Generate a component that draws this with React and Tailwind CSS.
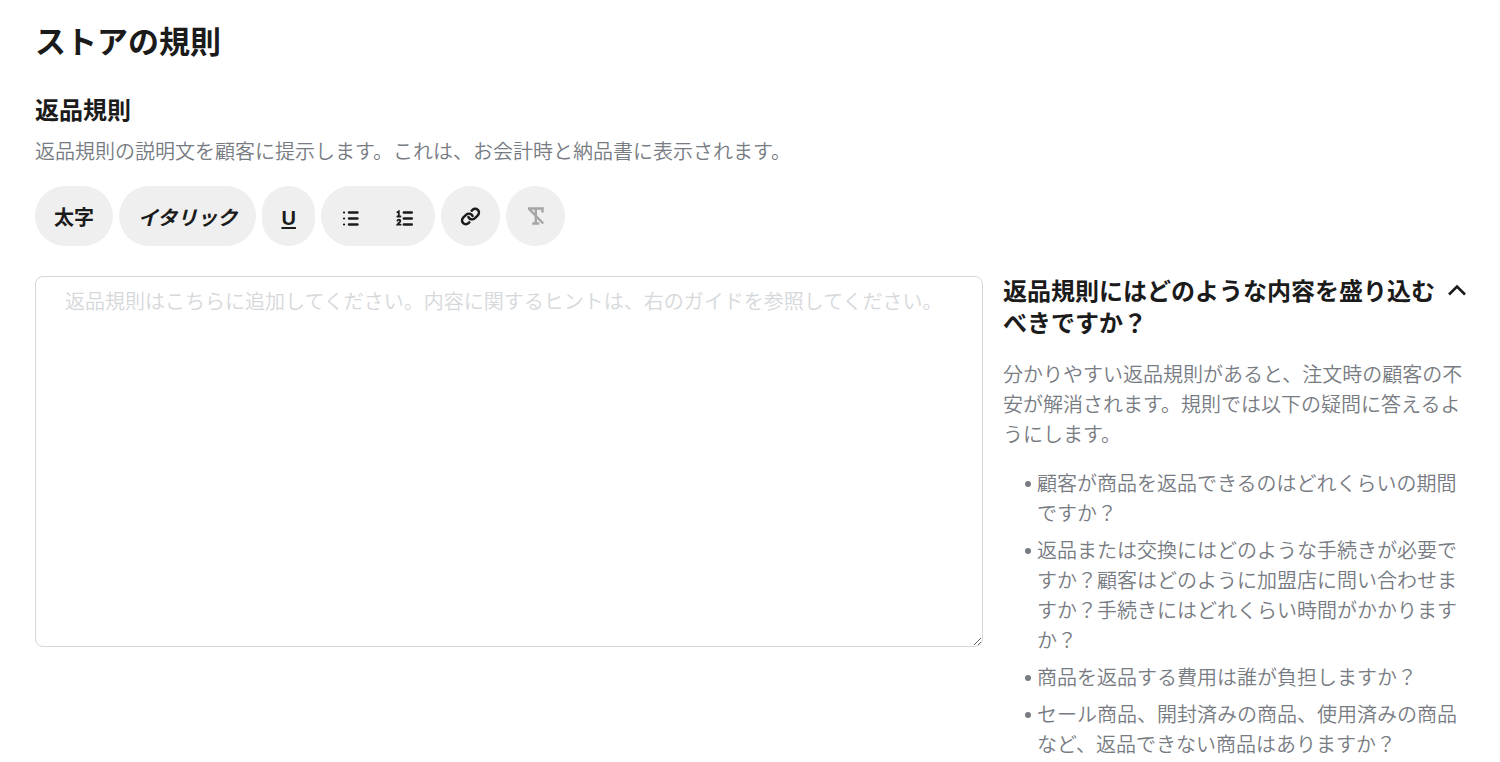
import React from 'react';

const pill = 'flex h-[60px] items-center justify-center rounded-full bg-[#efefef] text-[#1b1b1b]';

function BulletListIcon() {
  return (
    <svg width="20" height="20" viewBox="0 0 20 20" fill="none" stroke="currentColor" strokeWidth="2.4" strokeLinecap="round" aria-hidden="true">
      <path d="M8 4.500h8.500M8 10.500h8.500M8 16.500h8.500" />
      <path strokeWidth="2.2" d="M3 4.500h.1M3 10.500h.1M3 16.500h.1" />
    </svg>
  );
}

function NumberListIcon() {
  return (
    <svg width="20" height="20" viewBox="0 0 20 20" fill="none" stroke="currentColor" strokeWidth="2.4" strokeLinecap="round" aria-hidden="true">
      <path d="M8.800 4.500h8M8.800 10.500h8M8.800 16.500h8" />
      <path strokeWidth="1.800" d="M2.400 4.200l1.400-.9v5M2.300 8.500h3.200M2.400 12.700c.3-1.400 2.900-1.400 2.900.2c0 1.200-1.700 2-2.900 3.800h3.300" />
    </svg>
  );
}

function LinkIcon() {
  return (
    <svg width="21" height="21" viewBox="0 0 24 24" fill="none" stroke="currentColor" strokeWidth="2.800" strokeLinecap="round" aria-hidden="true">
      <path d="M9.600 12.500a4.500 4.500 0 0 0 7.200 1.600l3.600-3.500a4.300 4.300 0 0 0-6.100-6.100l-1 .9" />
      <path d="M14.400 11.500a4.500 4.500 0 0 0-7.200-1.600l-3.600 3.500a4.300 4.300 0 0 0 6.100 6.100l1-.9" />
    </svg>
  );
}

function ClearFormatIcon() {
  return (
    <svg width="22" height="22" viewBox="0 0 22 22" fill="none" stroke="currentColor" strokeWidth="2.400" aria-hidden="true">
      <path d="M3 3.500h14.500v4M10.800 3.500v15M7.300 18.500h7" />
      <path d="M3.800 3.700l14.400 14.800" />
    </svg>
  );
}

function Toolbar() {
  return (
    <div role="toolbar" aria-label="書式" className="mt-[19px] flex flex-wrap gap-[6px]">
      <button type="button" className={`${pill} px-[19px] pt-1 text-[20px] font-semibold`}>太字</button>
      <button type="button" className={`${pill} px-[19px] pt-1 text-[20px] font-semibold italic`}>イタリック</button>
      <button type="button" aria-label="下線" className={`${pill} w-[53px] pt-1 text-[20px] font-semibold underline underline-offset-2 decoration-2`}>U</button>
      <div className="flex rounded-full bg-[#efefef] px-[3px]">
        <button type="button" aria-label="箇条書き" className={`${pill} w-[54px] pt-1`}><BulletListIcon /></button>
        <button type="button" aria-label="番号付きリスト" className={`${pill} w-[54px] pt-1`}><NumberListIcon /></button>
      </div>
      <button type="button" aria-label="リンク" className={`${pill} w-[59px]`}><LinkIcon /></button>
      <button type="button" aria-label="書式をクリア" disabled className="flex h-[60px] w-[59px] items-center justify-center rounded-full bg-[#efefef] text-[#a5a5a5]"><ClearFormatIcon /></button>
    </div>
  );
}

const questions = [
  '顧客が商品を返品できるのはどれくらいの期間ですか？',
  '返品または交換にはどのような手続きが必要ですか？顧客はどのように加盟店に問い合わせますか？手続きにはどれくらい時間がかかりますか？',
  '商品を返品する費用は誰が負担しますか？',
  'セール商品、開封済みの商品、使用済みの商品など、返品できない商品はありますか？',
];

function Guide() {
  return (
    <aside>
      <h3>
        <button type="button" aria-expanded="true" className="flex w-full items-start justify-between text-left text-[24px] leading-[32px] font-semibold text-[#1b1b1b]">
          <span className="flex-1">返品規則にはどのような内容を盛り込むべきですか？</span>
          <svg className="mt-1 shrink-0" width="20" height="20" viewBox="0 0 20 20" fill="none" stroke="currentColor" strokeWidth="2.6" aria-hidden="true">
            <path d="M2 14.500l8-8 8 8" />
          </svg>
        </button>
      </h3>
      <p className="mt-5 text-[20px] leading-[30px]">分かりやすい返品規則があると、注文時の顧客の不安が解消されます。規則では以下の疑問に答えるようにします。</p>
      <ul className="mt-[19px] flex flex-col gap-[7px] pl-[22px] text-[20px] leading-[30px]">
        {questions.map((q) => (
          <li key={q} className="flex gap-[6px]">
            <span aria-hidden="true" className="mt-3 size-[6px] shrink-0 rounded-full bg-current" />
            <span>{q}</span>
          </li>
        ))}
      </ul>
    </aside>
  );
}

export default function App() {
  return (
    <main lang="ja" className="bg-white pt-[23px] pr-[33px] pl-[35px] font-['Liberation_Sans','Noto_Sans_CJK_JP',sans-serif] font-[350] text-[#777b82]">
      <h1 className="text-[31px] leading-[40px] font-semibold text-[#1b1b1b]">ストアの規則</h1>
      <h2 className="mt-8 text-[24px] leading-[32px] font-semibold text-[#1b1b1b]">返品規則</h2>
      <p id="policy-help" className="mt-[10px] text-[20px] leading-[30px]">返品規則の説明文を顧客に提示します。これは、お会計時と納品書に表示されます。</p>
      <Toolbar />
      <div className="mt-[30px] grid grid-cols-[948fr_464fr] items-start gap-5">
        <textarea
          aria-label="返品規則"
          aria-describedby="policy-help"
          placeholder="返品規則はこちらに追加してください。内容に関するヒントは、右のガイドを参照してください。"
          className="block h-[371px] w-full resize-y rounded-[8px] border border-[#d5d6d8] px-[29px] py-[10px] text-[20px] leading-[30px] text-[#1b1b1b] placeholder:text-[#d5d8db]"
        />
        <Guide />
      </div>
    </main>
  );
}
